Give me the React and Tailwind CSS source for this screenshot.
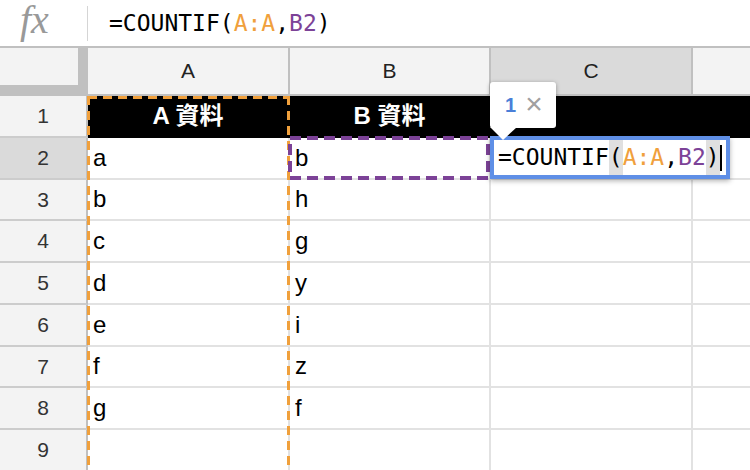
import React from "react";

const ORANGE = "#f0a03c";
const PURPLE = "#7c4297";
const SANS = "font-['Liberation_Sans','Noto_Sans_CJK_TC',sans-serif]";
const MONO = "font-['DejaVu_Sans_Mono',monospace]";

const rows = [
    ["A 資料", "B 資料"],
    ["a", "b"],
    ["b", "h"],
    ["c", "g"],
    ["d", "y"],
    ["e", "i"],
    ["f", "z"],
    ["g", "f"],
    ["", ""],
];

function Formula() {
    return (
        <>
            <span>=COUNTIF(</span>
            <span style={{ color: ORANGE }}>A:A</span>
            <span>,</span>
            <span style={{ color: PURPLE }}>B2</span>
            <span>)</span>
        </>
    );
}

function GridRow({ n, a, b }) {
    const header = n === 1;
    const cell = header
        ? "bg-black border-black text-white font-bold justify-center"
        : "bg-white border-[#e2e2e2] text-black pl-[5px]";
    return (
        <div className="flex h-[41.75px]">
            <div className={`w-[88px] shrink-0 flex items-center justify-center border-r-2 border-b-2 border-r-[#c0c0c0] border-b-[#cccccc] text-[21px] text-[#333] ${n === 2 ? "bg-[#dadada]" : "bg-[#f3f3f3]"}`}>
                {n}
            </div>
            <div className={`w-[202px] shrink-0 flex items-center border-r-2 border-b-2 text-[24px] ${cell}`}>{a}</div>
            <div className={`w-[201px] shrink-0 flex items-center border-r-2 border-b-2 text-[24px] ${cell}`}>{b}</div>
            <div className={`w-[202px] shrink-0 border-r-2 border-b-2 ${header ? "bg-black border-black" : "border-[#e2e2e2]"}`} />
            <div className={`flex-1 border-b-2 ${header ? "bg-black border-black" : "border-[#e2e2e2]"}`} />
        </div>
    );
}

export default function App() {
    return (
        <div className={`relative w-[750px] h-[470px] overflow-hidden bg-white ${SANS}`}>
            {/* formula bar */}
            <div className="flex items-center h-[48px] border-b-2 border-[#c0c0c0]">
                <div className="w-[87px] shrink-0 mb-[6px] pl-[14px] font-['Liberation_Serif',serif] text-[40px] leading-[40px] text-[#999999]">
                    <span className="inline-block italic leading-[40px] px-[6px]">fx</span>
                </div>
                <div className="w-px h-[35px] bg-[#d5d5d5]" />
                <div className={`pl-[21px] text-[23px] text-black ${MONO}`}>
                    <Formula />
                </div>
            </div>

            {/* column headers */}
            <div className="flex h-[48px] border-b-2 border-[#c0c0c0] text-[21px] text-[#222]">
                <div className="w-[88px] shrink-0 bg-[#c0c0c0]">
                    <div className="w-[78px] h-[37px] bg-[#f3f3f3]" />
                </div>
                <div className="w-[202px] shrink-0 flex items-center justify-center bg-[#f3f3f3] border-r-2 border-[#c0c0c0]">A</div>
                <div className="w-[201px] shrink-0 flex items-center justify-center bg-[#f3f3f3] border-r-2 border-[#c0c0c0]">B</div>
                <div className="w-[202px] shrink-0 flex items-center justify-center bg-[#dadada] border-r-2 border-[#c0c0c0]">C</div>
                <div className="flex-1 bg-[#f3f3f3]" />
            </div>

            {rows.map(([a, b], i) => (
                <GridRow key={i} n={i + 1} a={a} b={b} />
            ))}

            {/* reference highlights */}
            <svg className="absolute left-0 top-0 pointer-events-none" width="750" height="470">
                <g stroke={ORANGE} strokeWidth="3" strokeDasharray="9 6" fill="none">
                    <line x1="88" y1="97.5" x2="290" y2="97.5" />
                    <line x1="88.5" y1="96" x2="88.5" y2="470" />
                    <line x1="288.5" y1="96" x2="288.5" y2="470" />
                </g>
                <rect x="290" y="138" width="198" height="40" fill="none" stroke={PURPLE} strokeWidth="4" strokeDasharray="11 6" />
            </svg>

            {/* cell editor */}
            <div className={`absolute left-[490px] top-[136px] w-[240px] h-[43px] border-4 border-[#5f8fe6] bg-white shadow-[0_2px_5px_rgba(0,0,0,0.3)] flex items-center pl-[4px] text-[23px] text-black ${MONO}`}>
                <span>=COUNTIF</span>
                <span className="bg-[#e0e0e0]">(</span>
                <span style={{ color: ORANGE }}>A:A</span>
                <span>,</span>
                <span style={{ color: PURPLE }}>B2</span>
                <span className="bg-[#e0e0e0]">)</span>
                <span className="inline-block w-[2px] h-[26px] bg-black" />
            </div>

            {/* argument tooltip */}
            <div className="absolute left-[490px] top-[82px] w-[66px] h-[46px] bg-white rounded-[3px] shadow-[0_1px_4px_rgba(0,0,0,0.35)] flex items-center pl-[15px] gap-[9px]">
                <span className="text-[20px] font-bold text-[#4a7fd8]">1</span>
                <span className="text-[30px] text-[#a0a0a0] leading-none pb-[2px]">×</span>
            </div>
            <svg className="absolute left-[490px] top-[127px]" width="30" height="14">
                <polygon points="0,0 27,0 13,13" fill="white" />
            </svg>
        </div>
    );
}
